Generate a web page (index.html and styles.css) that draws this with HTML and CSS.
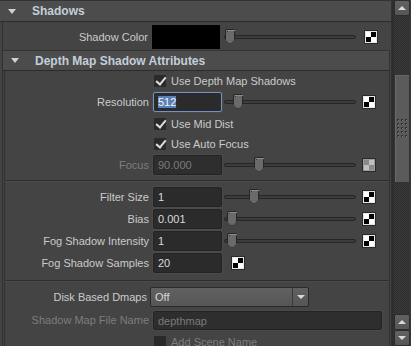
FILE: index.html
```html
<!DOCTYPE html>
<html lang="en">
<head>
    <meta charset="UTF-8">
    <title>Attribute Editor</title>
    <link rel="stylesheet" href="styles.css">
</head>
<body>
    <div class="editor">
        <div class="pane">
            <div class="frame top">
                <div class="frame-head"><span class="arrow"></span>Shadows</div>
                <div class="frame-body">
                    <div class="row colorRow">
                        <span class="lbl wide">Shadow Color</span>
                        <span class="swatch"></span>
                        <span class="slider s-color"><span class="thumb" style="left:0px"></span></span>
                        <span class="map m-color"></span>
                    </div>
                    <div class="frame sub">
                        <div class="frame-head"><span class="arrow"></span>Depth Map Shadow Attributes</div>
                        <div class="frame-body">
                            <div class="row check"><span class="box on"></span>Use Depth Map Shadows</div>
                            <div class="row field">
                                <span class="lbl">Resolution</span>
                                <span class="input focus"><span class="sel">512</span></span>
                                <span class="slider"><span class="thumb" style="left:8px"></span></span>
                                <span class="map"></span>
                            </div>
                            <div class="row check mid"><span class="box on"></span>Use Mid Dist</div>
                            <div class="row check"><span class="box on"></span>Use Auto Focus</div>
                            <div class="row field off">
                                <span class="lbl">Focus</span>
                                <span class="input">90.000</span>
                                <span class="slider"><span class="thumb" style="left:29px"></span></span>
                                <span class="map grey"></span>
                            </div>
                            <div class="sep"></div>
                            <div class="row field">
                                <span class="lbl">Filter Size</span>
                                <span class="input">1</span>
                                <span class="slider"><span class="thumb" style="left:24px"></span></span>
                                <span class="map"></span>
                            </div>
                            <div class="row field">
                                <span class="lbl">Bias</span>
                                <span class="input">0.001</span>
                                <span class="slider"><span class="thumb" style="left:2px"></span></span>
                                <span class="map"></span>
                            </div>
                            <div class="row field">
                                <span class="lbl">Fog Shadow Intensity</span>
                                <span class="input">1</span>
                                <span class="slider"><span class="thumb" style="left:2px"></span></span>
                                <span class="map"></span>
                            </div>
                            <div class="row field">
                                <span class="lbl">Fog Shadow Samples</span>
                                <span class="input">20</span>
                                <span class="map near"></span>
                            </div>
                            <div class="sep low"></div>
                            <div class="row field">
                                <span class="lbl dmap">Disk Based Dmaps</span>
                                <span class="combo">Off<span class="drop"></span></span>
                            </div>
                            <div class="row field off file">
                                <span class="lbl">Shadow Map File Name</span>
                                <span class="input long">depthmap</span>
                            </div>
                            <div class="row check off"><span class="box"></span>Add Scene Name</div>
                        </div>
                    </div>
                </div>
            </div>
        </div>
        <div class="scrollbar">
            <div class="btn up"></div>
            <div class="trough t1"></div>
            <div class="handle">
                <svg class="grip" width="11" height="19" viewBox="0 0 11 19">
                    <g fill="#2e2e2e">
                        <rect x="0" y="0" width="2" height="2"/><rect x="4" y="0" width="2" height="2"/><rect x="8" y="0" width="2" height="2"/>
                        <rect x="0" y="4" width="2" height="2"/><rect x="4" y="4" width="2" height="2"/><rect x="8" y="4" width="2" height="2"/>
                        <rect x="0" y="8" width="2" height="2"/><rect x="4" y="8" width="2" height="2"/><rect x="8" y="8" width="2" height="2"/>
                        <rect x="0" y="12" width="2" height="2"/><rect x="4" y="12" width="2" height="2"/><rect x="8" y="12" width="2" height="2"/>
                        <rect x="0" y="16" width="2" height="2"/><rect x="4" y="16" width="2" height="2"/><rect x="8" y="16" width="2" height="2"/>
                    </g>
                    <g fill="#777">
                        <rect x="1" y="1" width="1" height="1"/><rect x="5" y="1" width="1" height="1"/><rect x="9" y="1" width="1" height="1"/>
                        <rect x="1" y="5" width="1" height="1"/><rect x="5" y="5" width="1" height="1"/><rect x="9" y="5" width="1" height="1"/>
                        <rect x="1" y="9" width="1" height="1"/><rect x="5" y="9" width="1" height="1"/><rect x="9" y="9" width="1" height="1"/>
                        <rect x="1" y="13" width="1" height="1"/><rect x="5" y="13" width="1" height="1"/><rect x="9" y="13" width="1" height="1"/>
                        <rect x="1" y="17" width="1" height="1"/><rect x="5" y="17" width="1" height="1"/><rect x="9" y="17" width="1" height="1"/>
                    </g>
                </svg>
            </div>
            <div class="trough t2"></div>
            <div class="btn up"></div>
            <div class="btn down"></div>
        </div>
    </div>
</body>
</html>
```
FILE: styles.css
```css
*{
    margin: 0;
    padding: 0;
    box-sizing: border-box;
}
body{
    background: #444;
    font-family: "Liberation Sans", Arial, sans-serif;
    font-size: 11px;
    color: #cbcbcb;
}
.editor{
    display: flex;
    width: 411px;
    height: 346px;
    overflow: hidden;
}
.pane{
    width: 394px;
    height: 346px;
    background: #444;
    border-right: 2px solid #2e2e2e;
    overflow: hidden;
}
.frame-head{
    display: flex;
    align-items: center;
    height: 22px;
    background: #4c4c4c;
    border-top: 1px solid #333;
    border-bottom: 1px solid #2c2c2c;
    border-right: 1px solid #333;
    font-size: 12px;
    font-weight: bold;
    color: #c3cedb;
}
.arrow{
    width: 0;
    height: 0;
    margin: 0 16px 0 8px;
    border-left: 4px solid transparent;
    border-right: 4px solid transparent;
    border-top: 5px solid #d0d0d0;
}
.frame-body{
    margin-left: 2px;
    border-left: 1px solid #313131;
    border-right: 1px solid #313131;
}
.sub .frame-head{
    height: 21px;
    margin-right: 1px;
}
.sub .frame-body{
    margin-left: 1px;
    margin-right: 1px;
}
.row{
    display: flex;
    align-items: center;
    white-space: nowrap;
}
.colorRow{
    height: 28px;
    padding-top: 2px;
}
.lbl{
    width: 144px;
    margin-right: 4px;
    text-align: right;
}
.lbl.wide{
    width: 145px;
}
.lbl.dmap{
    width: 142px;
    margin-right: 3px;
}
.swatch{
    width: 68px;
    height: 24px;
    background: #000;
}
.check{
    height: 20px;
    padding-left: 149px;
}
.check.mid{
    height: 21px;
}
.box{
    position: relative;
    width: 12px;
    height: 12px;
    margin-right: 5px;
    background: #2a2a2a;
    border-radius: 1px;
}
.box.on::after{
    content: "";
    position: absolute;
    left: 4px;
    top: 0;
    width: 4px;
    height: 8px;
    border-right: 2px solid #dedede;
    border-bottom: 2px solid #dedede;
    transform: rotate(40deg);
}
.field{
    height: 22px;
}
.input{
    width: 69px;
    height: 20px;
    padding-left: 4px;
    line-height: 18px;
    background: #2b2b2b;
    border: 1px solid #232323;
    border-radius: 2px;
    box-shadow: 0 0 0 1px #4a4a4a;
    color: #dadada;
}
.input.focus{
    border-color: #7193c4;
}
.sel{
    background: #5d80b4;
    color: #eef3fa;
}
.input.long{
    width: 229px;
    height: 19px;
}
.off{
    color: #7d7d7d;
}
.off .input{
    color: #7a7a7a;
    background: #2e2e2e;
}
.file{
    height: 24px;
}
.slider{
    position: relative;
    width: 132px;
    height: 4px;
    margin-left: 2px;
    background: #3c3c3c;
    border: 1px solid #262626;
    border-radius: 2px;
}
.slider.s-color{
    margin-left: 4px;
}
.thumb{
    position: absolute;
    top: -7px;
    width: 10px;
    height: 15px;
    background: #6a6a6a;
    border: 1px solid #262626;
    border-radius: 1px 1px 0 0;
    clip-path: polygon(0 0, 100% 0, 100% 68%, 50% 100%, 0 68%);
}
.thumb::before{
    content: "";
    position: absolute;
    left: 1px;
    top: 1px;
    width: 6px;
    height: 1px;
    border-left: 1px solid #333;
    border-right: 1px solid #333;
    box-shadow: 0 -1px 0 #8a8a8a;
}
.map{
    width: 12px;
    height: 12px;
    margin-left: 7px;
    border: 1px solid #e6e6e6;
    box-shadow: 0 0 0 1px #2a2a2a;
    background: conic-gradient(#000 0 25%, #fff 0 50%, #000 0 75%, #fff 0);
}
.map.m-color{
    margin-left: 9px;
}
.map.near{
    margin-left: 10px;
}
.map.grey{
    border-color: #9a9a9a;
    background: conic-gradient(#c0c0c0 0 25%, #8a8a8a 0 50%, #c0c0c0 0 75%, #8a8a8a 0);
}
.sep{
    height: 1px;
    margin: 4px 0 5px -1px;
    background: #2e2e2e;
    box-shadow: 0 1px 0 #4b4b4b;
}
.sep.low{
    margin-top: 6px;
}
.combo{
    position: relative;
    display: flex;
    align-items: center;
    width: 159px;
    height: 20px;
    padding-left: 4px;
    background: linear-gradient(#616161, #565656);
    border: 1px solid #2a2a2a;
    border-radius: 2px;
    color: #d8d8d8;
}
.drop{
    position: absolute;
    right: 0;
    top: 0;
    width: 16px;
    height: 18px;
    border-left: 1px solid #3a3a3a;
}
.drop::after{
    content: "";
    position: absolute;
    left: 4px;
    top: 7px;
    border-left: 4px solid transparent;
    border-right: 4px solid transparent;
    border-top: 4px solid #d8d8d8;
}
.scrollbar{
    display: flex;
    flex-direction: column;
    width: 17px;
    height: 346px;
    padding-right: 1px;
    background: #3a3a3a;
}
.btn{
    position: relative;
    height: 16px;
    background: linear-gradient(#626262, #565656);
    border: 1px solid #2c2c2c;
    border-radius: 2px;
}
.btn::after{
    content: "";
    position: absolute;
    left: 3px;
    top: 5px;
    border-left: 4px solid transparent;
    border-right: 4px solid transparent;
}
.up::after{
    border-bottom: 4px solid #dadada;
}
.down::after{
    border-top: 4px solid #dadada;
}
.trough{
    background: repeating-conic-gradient(#2a2a2a 0 25%, #3e3e3e 0 50%) 0 0/2px 2px;
}
.t1{
    height: 58px;
}
.t2{
    height: 131px;
}
.handle{
    display: flex;
    align-items: center;
    justify-content: center;
    height: 109px;
    background: #5b5b5b;
    border: 1px solid #333;
    box-shadow: inset 1px 1px 0 #686868;
}
.grip{
    display: block;
    margin-left: 1px;
}
```
